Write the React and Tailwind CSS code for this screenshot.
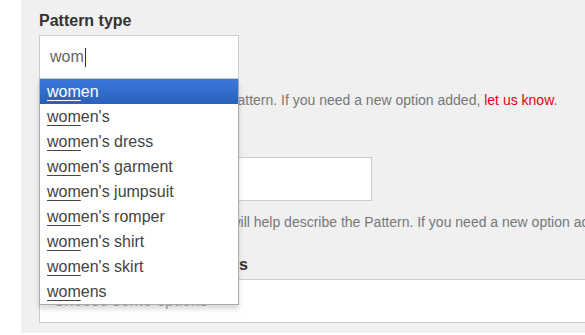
import React from "react";

const options = [
  "women",
  "women's",
  "women's dress",
  "women's garment",
  "women's jumpsuit",
  "women's romper",
  "women's shirt",
  "women's skirt",
  "womens",
];

const font = { fontFamily: '"Liberation Sans", Arial, sans-serif' };

const App = () => {
  return (
    <div className="w-[585px] h-[335px] bg-white overflow-hidden" style={font}>
      <div className="ml-[21px] bg-[#f0f0f0] pl-[18px] pt-[11px] pb-[10px]">
        <div className="relative">
          <div className="text-[16px] leading-[20px] font-bold text-[#333] mb-[4px]">
            Pattern type
          </div>
          <div className="w-[200px] h-[44px] bg-white border border-[#ccc] flex items-center pl-[10px]">
            <span className="text-[16px] text-[#666]">wom</span>
            <span className="w-px h-[19px] bg-[#333] ml-px" />
          </div>

          <div className="absolute left-0 top-[68px] z-10 w-[200px] bg-white border border-[#aaa] border-t-0 shadow-[0_4px_5px_rgba(0,0,0,0.15)]">
            {options.map((o, i) => (
              <div
                key={o}
                className={`h-[25px] pl-[7px] flex items-center text-[16px] whitespace-nowrap ${
                  i === 0
                    ? "bg-[linear-gradient(#3875d7_20%,#2a62bc_90%)] text-white"
                    : "text-[#444]"
                }`}
              >
                <span className="underline underline-offset-[3px]">wom</span>
                {o.slice(3)}
              </div>
            ))}
          </div>

          <div className="mt-[12px] text-[14px] leading-[18px] text-[#777] whitespace-nowrap">
            Choose the type that suits the Pattern. If you need a new option added,{" "}
            <span className="text-[#e3001b]">let us know</span>.
          </div>
        </div>

        <div className="mt-[24px]">
          <div className="text-[16px] leading-[20px] font-bold text-[#333] mb-[4px]">
            Pattern tags
          </div>
          <div className="w-[333px] h-[44px] bg-white border border-[#ccc]" />
          <div className="mt-[12px] text-[14px] leading-[18px] text-[#777] whitespace-nowrap">
            Choose the style keyword that will help describe the Pattern. If you need a new option added, let us know.
          </div>
        </div>

        <div className="mt-[24px]">
          <div className="text-[16px] leading-[20px] font-bold text-[#333] mb-[4px]">
            Recommended fabric types
          </div>
          <div className="w-[600px] h-[44px] bg-white border border-[#ccc] flex items-center pl-[13px]">
            <span className="text-[16px] text-[#aaa]">Choose some options</span>
          </div>
        </div>
      </div>
    </div>
  );
};

export default App;
